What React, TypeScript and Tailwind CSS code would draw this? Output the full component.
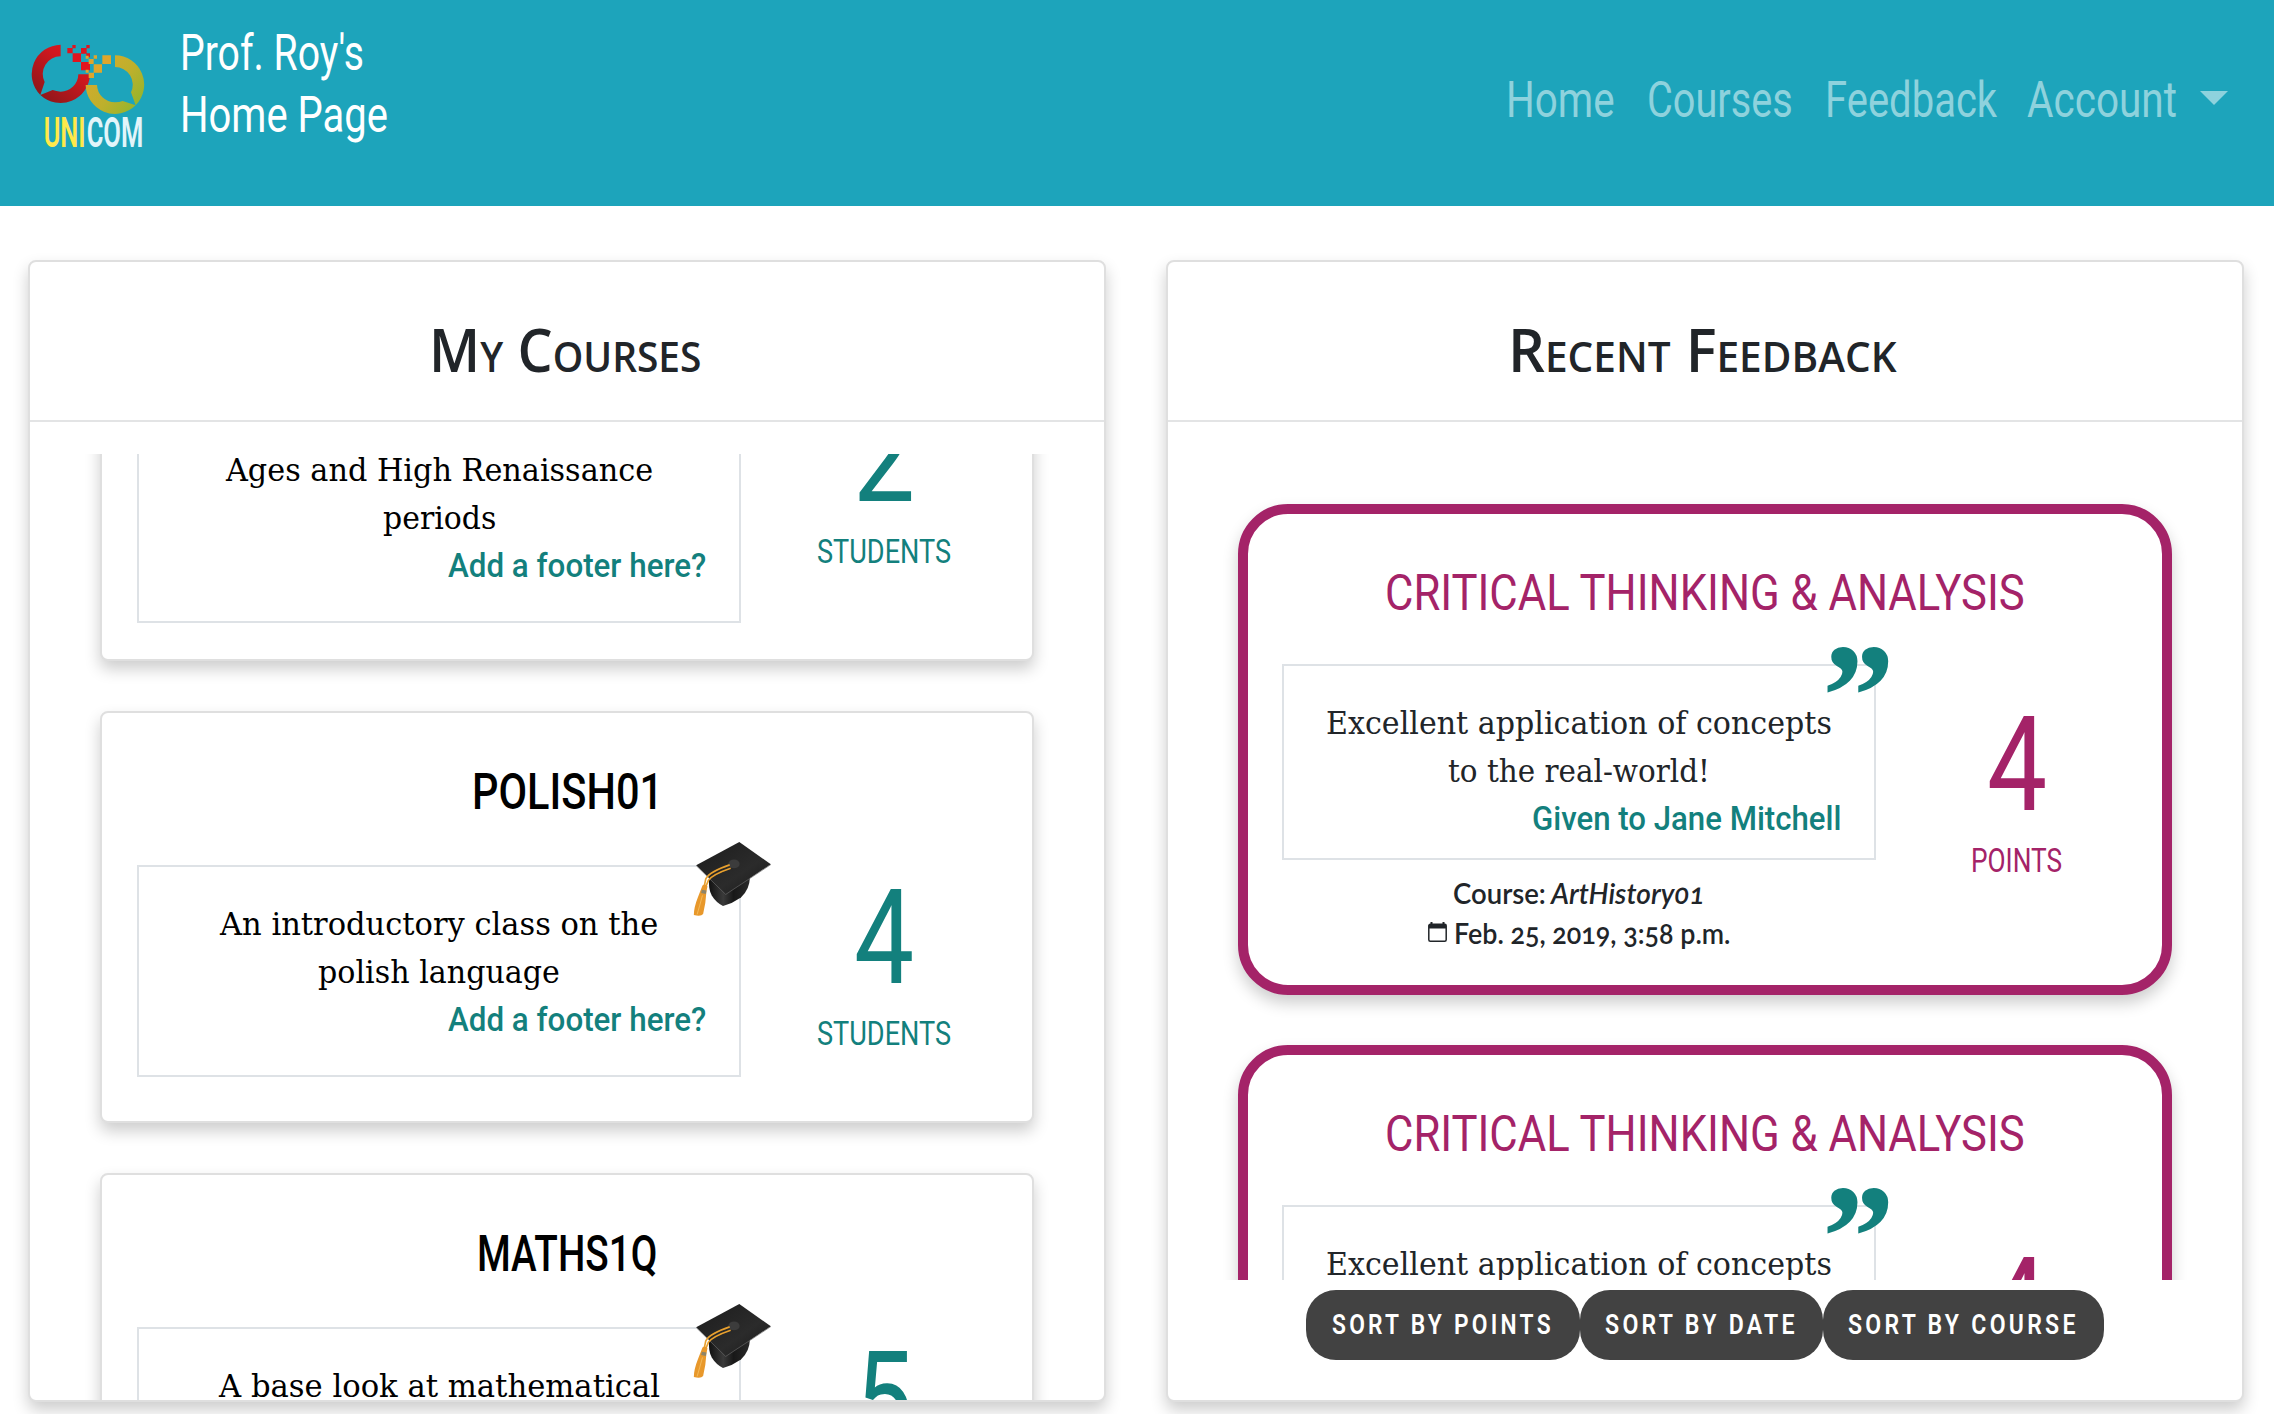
import { useLayoutEffect, useRef, useState } from "react";

const sans = "font-['Roboto',sans-serif]";
const slab = "font-['DejaVu_Serif',serif]";
const human = "font-['Lato',sans-serif] text-[29px] leading-[40px] font-semibold oldstyle-nums";

/** Condenses a single line of text so that it fills the width of its box. */
function Fit({ box, text, children }: { box: string; text: string; children: React.ReactNode }) {
  const outer = useRef<HTMLSpanElement>(null);
  const inner = useRef<HTMLSpanElement>(null);
  const [scale, setScale] = useState(1);
  useLayoutEffect(() => {
    if (outer.current && inner.current) setScale(outer.current.clientWidth / inner.current.offsetWidth);
  }, [children]);
  return (
    <span ref={outer} className={`block shrink-0 ${box}`}>
      <span
        ref={inner}
        className={`block w-max origin-left whitespace-nowrap ${text}`}
        style={{ transform: `scaleX(${scale})` }}
      >
        {children}
      </span>
    </span>
  );
}

function Logo() {
  return (
    <svg viewBox="90 125 351 321" className="h-[107px] w-[117px]">
      <defs>
        <linearGradient id="red" x1="1" y1="0" x2="0.2" y2="1">
          <stop offset="0" stopColor="#e4151f" />
          <stop offset="0.4" stopColor="#cf171e" />
          <stop offset="1" stopColor="#8a171a" />
        </linearGradient>
        <linearGradient id="gold" x1="0" y1="0.2" x2="1" y2="1">
          <stop offset="0" stopColor="#d8aa2d" />
          <stop offset="0.5" stopColor="#bdb02c" />
          <stop offset="1" stopColor="#86b62d" />
        </linearGradient>
      </defs>
      <path
        fill="url(#red)"
        d="M182 133A88.500 88.500 0 0 0 121 284L134 245A53 53 0 0 1 182 168ZM121 284A88.500 88.500 0 0 0 270 222H235A53 53 0 0 1 182 274Q168 273 158 269Z"
      />
      <path
        fill="url(#gold)"
        d="M345 165A88 88 0 0 1 407 315L393 276A53 53 0 0 0 345 200ZM407 315A88 88 0 0 1 257 254H291A54 54 0 0 0 345 306Q358 306 368 302Z"
      />
      <path
        fill="#e0141f"
        d="M202 143h16v16h-16zM217 134h10v10h-10zM218 159h25v26h-25zM243 143h17v17h-17zM259 134h10v10h-10zM259 159h11v12h-11zM243 185h27v25h-27z"
      />
      <path
        fill="#dfa62b"
        d="M257 166h9v9h-9zM281 165h10v10h-10zM266 176h15v15h-15zM307 165h26v26h-26zM281 192h25v25h-25zM257 208h9v9h-9zM266 217h16v16h-16z"
      />
      <text x="131" y="440" fontSize="129" fontWeight="600" textLength="126" lengthAdjust="spacingAndGlyphs" fill="#ffe94a" className="font-['Roboto',sans-serif]">
        UNI
      </text>
      <text x="260" y="440" fontSize="129" fontWeight="600" textLength="170" lengthAdjust="spacingAndGlyphs" fill="#e2f5fa" className="font-['Roboto',sans-serif]">
        COM
      </text>
    </svg>
  );
}

function GraduationCap() {
  return (
    <svg viewBox="68 62 237 229" className="absolute -top-[26px] -right-[33px] h-[76px] w-[79px]">
      <defs>
        <linearGradient id="board" x1="0" y1="0" x2="1" y2="1">
          <stop offset="0" stopColor="#1c1c1c" />
          <stop offset="0.6" stopColor="#2b2b2b" />
          <stop offset="1" stopColor="#181818" />
        </linearGradient>
        <linearGradient id="crown" x1="0" y1="0" x2="1" y2="0">
          <stop offset="0" stopColor="#111" />
          <stop offset="0.35" stopColor="#3a3a3a" />
          <stop offset="0.6" stopColor="#181818" />
          <stop offset="1" stopColor="#2a2a2a" />
        </linearGradient>
      </defs>
      <path fill="url(#crown)" d="M116 175Q113 205 124 226Q137 247 158 258Q186 250 212 232Q238 208 239 172L180 150Z" />
      <path fill="url(#board)" d="M77 135L207 65L302 132L166 223Z" />
      <path fill="none" stroke="#6a6a6a" strokeWidth="2" d="M78 137L166 223L302 133" />
      <ellipse cx="191" cy="131" rx="17" ry="13" fill="#3c3c3c" />
      <path fill="none" stroke="#e8a02e" strokeWidth="5" d="M178 134Q118 154 106 176L101 200M181 144Q128 162 114 180L106 200" />
      <path fill="#e8982b" d="M96 196Q104 190 111 198L108 214Q106 250 98 282Q92 290 70 285Q70 262 82 232Z" />
      <path fill="#8e8468" d="M94 209L108 211L106 222L92 219Z" />
      <path fill="none" stroke="#f3b95a" strokeWidth="3" d="M96 226Q88 256 80 283" />
    </svg>
  );
}

function CalendarIcon() {
  return (
    <svg viewBox="0 0 19 20" className="mt-[9px] h-[20px] w-[19px]">
      <path d="M3.500 0V4M15.500 0V4" stroke="currentColor" strokeWidth="2" />
      <rect x="0.8" y="2.300" width="17.400" height="16.900" rx="1.500" fill="none" stroke="currentColor" strokeWidth="1.500" />
      <path d="M1 2H18V6.500H1Z" fill="currentColor" />
    </svg>
  );
}

const shadow = "shadow-[0_8px_16px_rgba(0,0,0,0.2)]";

function Stat({ value, label, color, digit, labelWidth, offset }: Record<string, string>) {
  return (
    <div className={`flex flex-1 flex-col items-center ${offset} ${color}`}>
      <Fit box={digit} text={`${sans} text-[132px] leading-[132px]`}>{value}</Fit>
      <Fit box={`mt-[5px] ${labelWidth}`} text={`${sans} text-[34px] leading-[48px]`}>{label}</Fit>
    </div>
  );
}

function Line({ width, children }: { width: string; children: string }) {
  return <Fit box={width} text={`${slab} text-[31px] leading-[48px]`}>{children}</Fit>;
}

function FooterLine({ width, children }: { width: string; children: string }) {
  return (
    <Fit box={`-mt-px mr-[33px] self-end ${width}`} text={`${sans} text-[34px] leading-[48px] font-medium text-[#13807d]`}>
      {children}
    </Fit>
  );
}

function Panel({ title, width, children }: { title: string; width: string; children: React.ReactNode }) {
  return (
    <section className={`flex h-[1142px] w-[1078px] shrink-0 flex-col overflow-hidden rounded-[8px] border-2 border-[#dfdfdf] bg-white ${shadow}`}>
      <header className="flex h-[160px] shrink-0 justify-center border-b-2 border-[#e3e4e5] pt-[57px] pr-[5px] text-[#212529]">
        <Fit box={width} text="font-['Open_Sans',sans-serif] text-[60px] leading-[60px] font-semibold [font-variant-caps:small-caps]">
          {title}
        </Fit>
      </header>
      {children}
    </section>
  );
}

type CourseCardProps = { title: string; titleWidth: string; stat: string; digit: string; children: React.ReactNode };

function CourseCard({ title, titleWidth, stat, digit, children }: CourseCardProps) {
  return (
    <article className={`flex h-[411.5px] shrink-0 flex-col items-center rounded-[8px] border-2 border-[#dfdfdf] bg-white pt-[49px] text-black ${shadow}`}>
      <Fit box={titleWidth} text={`${sans} text-[50px] leading-[60px] font-medium`}>{title}</Fit>
      <div className="mt-[43px] flex w-full pr-[3px] pl-[35px]">
        <div className="relative flex h-[212px] w-[604px] shrink-0 flex-col items-center border-2 border-[#dee2e6] pt-[33px]">
          {children}
          <GraduationCap />
        </div>
        <Stat value={stat} label="STUDENTS" color="text-[#13807d]" digit={digit} labelWidth="w-[134px]" offset="pt-[7px] pr-[2px]" />
      </div>
    </article>
  );
}

function FeedbackCard() {
  return (
    <article className={`flex h-[491px] shrink-0 flex-col items-center rounded-[50px] border-[10px] border-[#a42368] bg-white pt-[49px] text-[#212529] ${shadow}`}>
      <Fit box="w-[640px]" text={`${sans} text-[50px] leading-[60px] text-[#a42368]`}>CRITICAL THINKING &amp; ANALYSIS</Fit>
      <div className="mt-[41px] flex w-full pr-[3px] pl-[34px]">
        <div className="flex w-[594px] shrink-0 flex-col items-center">
          <div className="relative flex h-[196px] w-full flex-col items-center border-2 border-[#dee2e6] pt-[33px]">
            <Line width="w-[506px]">Excellent application of concepts</Line>
            <Line width="w-[262px]">to the real-world!</Line>
            <FooterLine width="w-[309px]">Given to Jane Mitchell</FooterLine>
            <span className="absolute -top-[45px] -right-[17px] font-['Liberation_Serif',serif] text-[150px] leading-[150px] font-bold tracking-[-8px] whitespace-nowrap text-[#13807d]">’’</span>
          </div>
          <div className="mt-[13px] flex h-[40px] gap-[5px]">
            <Fit box="w-[93px]" text={human}>Course:</Fit>
            <Fit box="w-[154px]" text={`${human} italic`}>ArtHistory01</Fit>
          </div>
          <div className="flex h-[40px] gap-[7px]">
            <CalendarIcon />
            <Fit box="w-[276px]" text={human}>Feb. 25, 2019, 3:58 p.m.</Fit>
          </div>
        </div>
        <Stat value="4" label="POINTS" color="text-[#a42368]" digit="w-[60px]" labelWidth="w-[91px]" offset="pt-[35px] pr-[2px]" />
      </div>
    </article>
  );
}

function SortButton({ box, width, children }: { box: string; width: string; children: string }) {
  return (
    <button className={`flex h-[70px] justify-center rounded-[30px] bg-[#424242] text-white ${box}`}>
      <Fit box={width} text={`${sans} text-left text-[28px] leading-[70px] font-semibold tracking-[4px]`}>{children}</Fit>
    </button>
  );
}

export default function App() {
  return (
    <div className="h-[1414px] w-[2274px] overflow-hidden bg-white">
      <nav className="flex h-[206px] items-start bg-[#1da4bb] pl-[30px] text-white">
        <div className="mt-[42px]"><Logo /></div>
        <div className="mt-[22px] ml-[33px]">
          <Fit box="w-[184px]" text={`${sans} text-[50px] leading-[62px]`}>Prof. Roy's</Fit>
          <Fit box="w-[208px]" text={`${sans} text-[50px] leading-[62px]`}>Home Page</Fit>
        </div>
        <div className="mt-[69px] mr-[46px] ml-auto flex text-[#8ed2dd]">
          <Fit box="w-[109px] mr-[32px]" text={`${sans} text-[50px] leading-[62px]`}>Home</Fit>
          <Fit box="w-[146px] mr-[32px]" text={`${sans} text-[50px] leading-[62px]`}>Courses</Fit>
          <Fit box="w-[172px] mr-[30px]" text={`${sans} text-[50px] leading-[62px]`}>Feedback</Fit>
          <Fit box="w-[150px] mr-[23px]" text={`${sans} text-[50px] leading-[62px]`}>Account</Fit>
          <span className="mt-[22px] h-0 w-0 border-x-[14px] border-t-[14px] border-x-transparent border-t-[#8ed2dd]" />
        </div>
      </nav>
      <main className="flex gap-[60px] pt-[54px] pl-[28px]">
        <Panel title="My Courses" width="w-[272px]">
          <div className="mt-[32px] flex h-[946px] flex-col gap-[50px] overflow-hidden px-[70px]">
            <article className={`-mt-[40px] flex h-[247px] shrink-0 rounded-b-[8px] border-2 border-[#dfdfdf] bg-white pr-[3px] pl-[35px] text-black ${shadow}`}>
              <div className="flex h-[207px] w-[604px] shrink-0 flex-col items-center border-2 border-t-0 border-[#dee2e6] pt-[30px]">
                <Line width="w-[427px]">Ages and High Renaissance</Line>
                <Line width="w-[113px]">periods</Line>
                <FooterLine width="w-[258px]">Add a footer here?</FooterLine>
              </div>
              <Stat value="2" label="STUDENTS" color="text-[#13807d]" digit="w-[62px]" labelWidth="w-[134px]" offset="-mt-[26px] pr-[2px]" />
            </article>
            <CourseCard title="POLISH01" titleWidth="w-[191px]" stat="4" digit="w-[60px]">
              <Line width="w-[438px]">An introductory class on the</Line>
              <Line width="w-[242px]">polish language</Line>
              <FooterLine width="w-[258px]">Add a footer here?</FooterLine>
            </CourseCard>
            <CourseCard title="MATHS1Q" titleWidth="w-[180px]" stat="5" digit="w-[58px]">
              <Line width="w-[441px]">A base look at mathematical</Line>
            </CourseCard>
          </div>
        </Panel>
        <Panel title="Recent Feedback" width="w-[389px]">
          <div className="mt-[32px] flex h-[826px] shrink-0 flex-col gap-[50px] overflow-hidden px-[70px] pt-[50px]">
            <FeedbackCard />
            <FeedbackCard />
          </div>
          <div className="mt-[10px] flex justify-center">
            <SortButton box="w-[274px]" width="w-[222px]">SORT BY POINTS</SortButton>
            <SortButton box="w-[243px]" width="w-[193px]">SORT BY DATE</SortButton>
            <SortButton box="w-[281px]" width="w-[231px]">SORT BY COURSE</SortButton>
          </div>
        </Panel>
      </main>
    </div>
  );
}
